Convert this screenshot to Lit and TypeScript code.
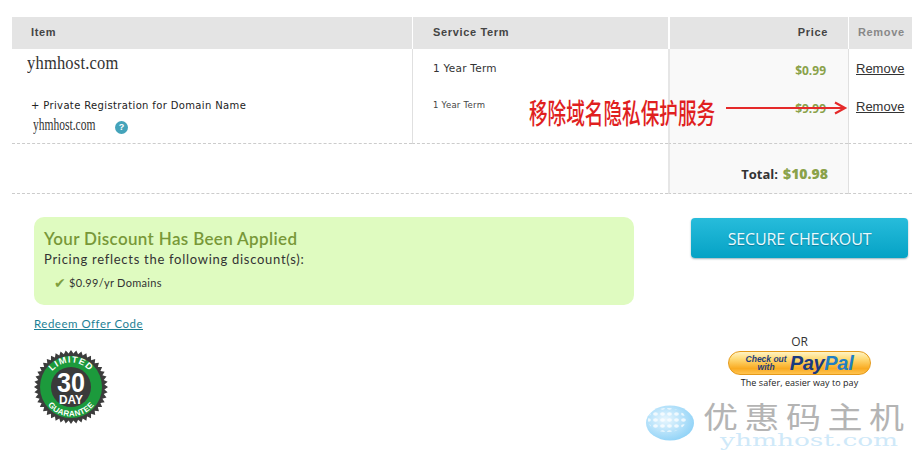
import { LitElement, html, css, svg } from "lit";
import { customElement } from "lit/decorators.js";

const teeth = () => {
  const pts: string[] = [];
  const n = 44;
  for (let i = 0; i < n * 2; i++) {
    const r = i % 2 ? 33.5 : 37;
    const a = (Math.PI * i) / n;
    pts.push(`${(38 + r * Math.cos(a)).toFixed(2)},${(38 + r * Math.sin(a)).toFixed(2)}`);
  }
  return pts.join(" ");
};

@customElement("app-root")
export class AppRoot extends LitElement {
  static styles = css`
    :host { display: block; width: 920px; height: 450px; position: relative; overflow: hidden; background: #fff; font-family: "Open Sans", "DejaVu Sans", sans-serif; color: #222; }
    .page { padding: 17px 8px 0 12px; }
    .table { display: grid; grid-template-columns: 400px 256px 180px 64px; }
    .th { height: 32px; padding-bottom: 2px; box-sizing: border-box; background: #e4e4e4; display: flex; align-items: center; font: bold 11px/1 "Liberation Sans", sans-serif; color: #444; letter-spacing: .65px; border-left: 1px solid #fff; }
    .th.first { border-left: 0; padding-left: 19px; }
    .th.svc { padding-left: 20px; }
    .th.price { justify-content: flex-end; padding-right: 20px; border-left-width: 2px; }
    .th.rem { color: #888; padding-left: 9px; }
    .td { border-bottom: 1px dashed #ccc; height: 94px; box-sizing: content-box; }
    .line1 { border-left: 1px solid #e0e0e0; }
    .line2 { border-left: 2px solid #e6e6e6; }
    .item { display: flex; flex-direction: column; }
    .dom1 { font: 16px/20px "Liberation Serif", serif; margin: 4px 0 0 15px; transform: scaleX(1.03) scaleY(1.15); transform-origin: left center; letter-spacing: .2px; color: #333; }
    .priv { font: 10px/14px "DejaVu Sans", sans-serif; letter-spacing: .36px; margin: 26px 0 0 19px; color: #222; }
    .domrow { display: flex; align-items: center; margin: 3px 0 0 21px; gap: 20px; }
    .dom2 { font: 16px/18px "Liberation Serif", serif; color: #333; display: inline-block; width: 62px; white-space: nowrap; transform: scaleX(.72) scaleY(1.1); transform-origin: left center; }
    .help { width: 13px; height: 13px; border-radius: 50%; background: #44a3ba; color: #fff; font: bold 9px/13px "Liberation Sans", sans-serif; text-align: center; margin-top: 4px; }
    .term { display: flex; flex-direction: column; padding-left: 20px; font-family: "DejaVu Sans", sans-serif; }
    .t1 { font-size: 10.5px; line-height: 14px; margin-top: 12px; letter-spacing: .25px; color: #333; }
    .t2 { font-size: 8.5px; line-height: 12px; margin-top: 24px; letter-spacing: .25px; color: #444; }
    .pricecol { background: #f9f9f9; display: flex; flex-direction: column; align-items: flex-end; padding-right: 22px; font: bold 12px/16px "Open Sans", sans-serif; color: #8aa24a; }
    .p1 { margin-top: 14px; }
    .p2 { margin-top: 22px; }
    .remcol { display: flex; flex-direction: column; padding-left: 7px; font: 13px/16px "Liberation Sans", sans-serif; }
    .remcol a { color: #333; text-decoration: underline; }
    .r1 { margin-top: 12px; }
    .r2 { margin-top: 22px; }
    .tt { height: 50px; box-sizing: border-box; border-bottom: 1px dashed #ccc; }
    .tt.mid { background: #f9f9f9; display: flex; align-items: center; justify-content: flex-end; padding-right: 20px; gap: 5px; padding-top: 10px; font: bold 13px/16px "Open Sans", sans-serif; color: #333; }
    .tt.mid b { color: #8aa24a; font-size: 14px; }
    .tt.span { grid-column: span 2; }
    .lower { display: flex; justify-content: space-between; padding: 23px 0 0 22px; }
    .left { width: 600px; }
    .disc { height: 88px; box-sizing: border-box; background: #dffbc0; border-radius: 10px; padding: 11px 10px; }
    .disc h3 { margin: 0; font: 600 17px/22px "Lato", sans-serif; color: #789838; letter-spacing: .35px; }
    .disc p { margin: 0; font: 13px/18px "Lato", sans-serif; letter-spacing: .72px; color: #333; }
    .disc .li { margin: 7px 0 0 10px; font: 11px/16px "Lato", sans-serif; letter-spacing: .3px; color: #333; display: flex; gap: 3px; align-items: center; }
    .check { color: #7f9f3e; font-size: 14px; font-family: "DejaVu Sans", sans-serif; }
    .redeem { display: block; margin-top: 11px; font: 11.5px/15px "Lato", sans-serif; letter-spacing: .5px; color: #1c7f95; text-decoration: underline; }
    .seal { display: block; margin: 18px 0 0 -1px; }
    .right { width: 217px; margin-right: 4px; display: flex; flex-direction: column; align-items: center; }
    .btn { width: 217px; height: 40px; margin-top: 1px; padding-top: 1px; box-sizing: border-box; border-radius: 4px; background: linear-gradient(#27bcdb, #05a2c5); box-shadow: 0 1px 2px rgba(0,60,80,.4); color: #eafaff; display: flex; align-items: center; justify-content: center; font: 16px/1 "Open Sans", sans-serif; letter-spacing: -.15px; text-shadow: 0 1px 1px rgba(0,60,80,.4); }
    .or { margin-top: 77px; font: 12px/14px "Open Sans", sans-serif; color: #333; }
    .pp { width: 143px; height: 24px; margin-top: 2px; box-sizing: border-box; border-radius: 12px; border: 1px solid #e59a1a; background: linear-gradient(#fff3c4 0%, #ffdc7a 30%, #f9ab22 75%, #ffc34f 100%); display: flex; align-items: center; justify-content: center; gap: 3px; color: #1f3d7a; }
    .pp .co { font: bold italic 8.5px/8.5px "Liberation Sans", sans-serif; text-align: center; }
    .pp .pl { font: bold italic 20px/1 "Liberation Sans", sans-serif; color: #1a3a80; letter-spacing: -.3px; }
    .pp .pl i { color: #1e7fc4; }
    .tag { margin-top: 2px; font: 9px/12px "Open Sans", sans-serif; letter-spacing: .05px; color: #222; }
    .note { position: absolute; left: 529px; top: 95px; font: 500 28px/34px "Noto Sans CJK SC", sans-serif; color: #e01f1f; transform: scaleX(.665); transform-origin: left top; white-space: nowrap; }
    .arrow { position: absolute; left: 725px; top: 101px; }
    .wm { position: absolute; left: 644px; top: 400px; width: 276px; height: 50px; }
    .wm .cn { position: absolute; left: 59px; top: 0; font: 35px/30px "Noto Sans CJK SC", sans-serif; letter-spacing: 6.5px; color: #b4b4b4; white-space: nowrap; transform: scaleY(.85); }
    .wm .en { position: absolute; left: 76px; top: 33px; font: 16px/16px "DejaVu Serif", serif; color: #cfe9f9; white-space: nowrap; transform: scaleX(1.65); transform-origin: left center; }
    .wm svg { position: absolute; left: 1px; top: 5px; }
  `;

  render() {
    return html`
      <div class="page">
        <div class="table">
          <div class="th first">Item</div>
          <div class="th svc">Service Term</div>
          <div class="th price">Price</div>
          <div class="th rem">Remove</div>

          <div class="td item">
            <div class="dom1">yhmhost.com</div>
            <div class="priv">+ Private Registration for Domain Name</div>
            <div class="domrow"><span class="dom2">yhmhost.com</span><span class="help">?</span></div>
          </div>
          <div class="td line1 term">
            <div class="t1">1 Year Term</div>
            <div class="t2">1 Year Term</div>
          </div>
          <div class="td line2 pricecol">
            <div class="p1">$0.99</div>
            <div class="p2">$9.99</div>
          </div>
          <div class="td line1 remcol">
            <a class="r1">Remove</a>
            <a class="r2">Remove</a>
          </div>

          <div class="tt span"></div>
          <div class="tt mid line2">Total: <b>$10.98</b></div>
          <div class="tt line1"></div>
        </div>
        <div class="lower">
          <div class="left">
            <div class="disc">
              <h3>Your Discount Has Been Applied</h3>
              <p>Pricing reflects the following discount(s):</p>
              <div class="li"><span class="check">✔</span>$0.99/yr Domains</div>
            </div>
            <a class="redeem">Redeem Offer Code</a>
            <svg class="seal" width="76" height="76" viewBox="0 0 76 76">
              <polygon points=${teeth()} fill="#3c3c3c"></polygon>
              <circle cx="38" cy="38" r="31" fill="#1c9a3c"></circle>
              <circle cx="38" cy="38" r="20" fill="#3a3a3a"></circle>
              <defs>
                <path id="top" d="M 13.5 38 A 24.5 24.5 0 0 1 62.5 38"></path>
                <path id="bot" d="M 8.5 38 A 29.5 29.5 0 0 0 67.5 38"></path>
              </defs>
              ${svg`<text font-family="Liberation Sans" font-weight="bold" font-size="9" fill="#fff" letter-spacing="1"><textPath href="#top" startOffset="50%" text-anchor="middle">LIMITED</textPath></text>
              <text font-family="Liberation Sans" font-weight="bold" font-size="8" fill="#fff" letter-spacing=".3"><textPath href="#bot" startOffset="50%" text-anchor="middle">GUARANTEE</textPath></text>
              <text x="38" y="43" text-anchor="middle" font-family="Liberation Sans" font-weight="bold" font-size="27" fill="#fff" textLength="28" lengthAdjust="spacingAndGlyphs">30</text>
              <text x="38" y="55" text-anchor="middle" font-family="Liberation Sans" font-weight="bold" font-size="13" fill="#fff" textLength="24" lengthAdjust="spacingAndGlyphs">DAY</text>`}
            </svg>
          </div>
          <div class="right">
            <div class="btn">SECURE CHECKOUT</div>
            <div class="or">OR</div>
            <div class="pp">
              <span class="co">Check out<br />with</span>
              <span class="pl">Pay<i>Pal</i></span>
            </div>
            <div class="tag">The safer, easier way to pay</div>
          </div>
        </div>
      </div>

      <div class="note">移除域名隐私保护服务</div>
      <svg class="arrow" width="124" height="14" viewBox="0 0 124 14">
        <path d="M1 7 H119" stroke="#e52a2a" stroke-width="2" fill="none"></path>
        <path d="M110 1.5 L120 7 L110 12.5" stroke="#e52a2a" stroke-width="2.2" fill="none"></path>
      </svg>

      <div class="wm">
        <svg width="50" height="36" viewBox="0 0 50 36">
          <defs>
            <radialGradient id="g" cx="40%" cy="40%" r="65%">
              <stop offset="0" stop-color="#e8f6fe"></stop>
              <stop offset="1" stop-color="#8fd2f7"></stop>
            </radialGradient>
            <pattern id="dots" width="7" height="6" patternUnits="userSpaceOnUse">
              <ellipse cx="3.5" cy="3" rx="2.4" ry="1.8" fill="#fff" opacity=".75"></ellipse>
            </pattern>
          </defs>
          <ellipse cx="25" cy="18" rx="24" ry="17.5" fill="url(#g)"></ellipse>
          <ellipse cx="22" cy="15" rx="19" ry="12" fill="url(#dots)"></ellipse>
        </svg>
        <div class="cn">优惠码主机</div>
        <div class="en">yhmhost.com</div>
      </div>
    `;
  }
}
